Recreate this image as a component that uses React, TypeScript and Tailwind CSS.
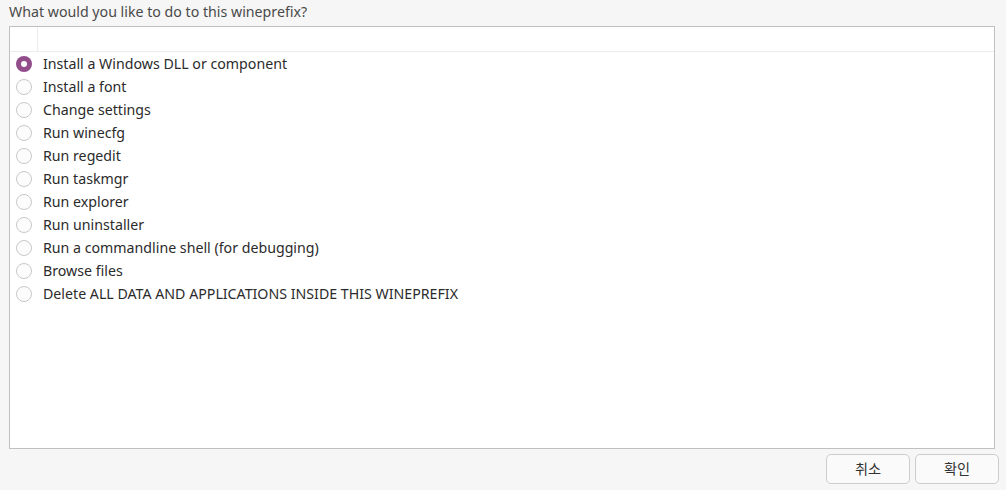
import React from "react";

const items = [
  "Install a Windows DLL or component",
  "Install a font",
  "Change settings",
  "Run winecfg",
  "Run regedit",
  "Run taskmgr",
  "Run explorer",
  "Run uninstaller",
  "Run a commandline shell (for debugging)",
  "Browse files",
  "Delete ALL DATA AND APPLICATIONS INSIDE THIS WINEPREFIX",
];

function Radio({ checked }: { checked: boolean }) {
  return checked ? (
    <span className="flex h-[16px] w-[16px] items-center justify-center rounded-full bg-[#924d8b]">
      <span className="h-[6px] w-[6px] rounded-full bg-white" />
    </span>
  ) : (
    <span className="h-[16px] w-[16px] rounded-full border border-[#c8c8c8] bg-[#fcfcfc]" />
  );
}

export default function App() {
  return (
    <div
      className="flex h-[490px] w-[1006px] flex-col bg-[#f6f6f6] text-[14.2px]"
      style={{ fontFamily: '"Noto Sans", "Noto Sans CJK KR", sans-serif' }}
    >
      <div className="h-[26px] pl-[9px] pt-[2px] leading-[20px] text-[#4a4a4a]">
        What would you like to do to this wineprefix?
      </div>
      <div className="ml-[9px] mr-[11px] flex h-[423px] flex-col border border-[#c0c0c0] bg-white">
        <div className="flex h-[25px] border-b border-[#ededed]">
          <div className="w-[28px] border-r border-[#ededed]" />
        </div>
        <div className="flex flex-col">
          {items.map((t, i) => (
            <div key={t} className="flex h-[23px] items-center">
              <div className="flex w-[33px] items-center pl-[6px]">
                <Radio checked={i === 0} />
              </div>
              <span className="text-[#2b2b2b]">{t}</span>
            </div>
          ))}
        </div>
      </div>
      <div className="flex justify-end gap-[5px] pr-[7px] pt-[5px]">
        <button className="h-[30px] w-[84px] rounded-[5px] border border-[#cdcdcd] bg-[#fafafa] text-[#333]">
          취소
        </button>
        <button className="h-[30px] w-[84px] rounded-[5px] border border-[#cdcdcd] bg-[#fafafa] text-[#333]">
          확인
        </button>
      </div>
    </div>
  );
}
